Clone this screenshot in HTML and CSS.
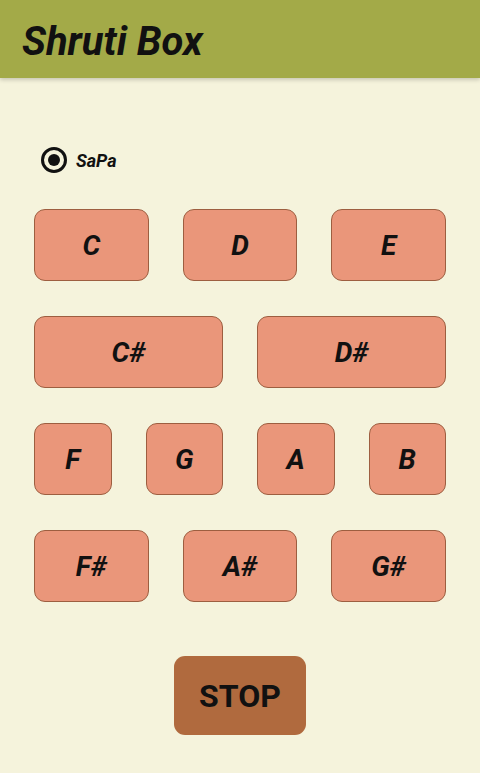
FILE: index.html
```html
<!DOCTYPE html>
<html lang="en">

<head>
  <meta charset="UTF-8">
  <meta name="viewport" content="width=device-width, initial-scale=1.0">
  <title>Shruti Box</title>
  <link rel="stylesheet" href="styles.css">
</head>

<body>
  <div class="bar">
    <h1>Shruti Box</h1>
  </div>

  <div class="main">
    <label class="radio">
      <span class="dot"></span>
      <span class="label">SaPa</span>
    </label>

    <div class="row three">
      <button class="note">C</button>
      <button class="note">D</button>
      <button class="note">E</button>
    </div>
    <div class="row two">
      <button class="note">C#</button>
      <button class="note">D#</button>
    </div>
    <div class="row four">
      <button class="note">F</button>
      <button class="note">G</button>
      <button class="note">A</button>
      <button class="note">B</button>
    </div>
    <div class="row three">
      <button class="note">F#</button>
      <button class="note">A#</button>
      <button class="note">G#</button>
    </div>

    <div class="foot">
      <button class="stop">STOP</button>
    </div>
  </div>
</body>

</html>
```

FILE: styles.css
```css
* {
  margin: 0;
  padding: 0;
  box-sizing: border-box;
}

body {
  width: 480px;
  height: 773px;
  background: #f5f3dc;
  font-family: Roboto, "Liberation Sans", sans-serif;
  overflow: hidden;
}

/* 標題列 */
.bar {
  height: 78px;
  background: #a3aa48;
  padding-left: 22px;
  display: flex;
  align-items: center;
  box-shadow: 0 2px 4px rgba(0, 0, 0, 0.18);
}

.bar h1 {
  font-size: 40px;
  font-weight: bold;
  font-style: italic;
  color: #111;
  margin-top: 4px;
}

.main {
  padding: 70px 34px 0;
}

.radio {
  display: flex;
  align-items: center;
  height: 24px;
  margin-left: 7px;
  margin-bottom: 37px;
}

.dot {
  width: 26px;
  height: 26px;
  border: 3px solid #111;
  border-radius: 50%;
  display: flex;
  align-items: center;
  justify-content: center;
}

.dot::after {
  content: "";
  width: 12px;
  height: 12px;
  border-radius: 50%;
  background: #111;
}

.label {
  margin-left: 9px;
  font-size: 18px;
  font-weight: bold;
  font-style: italic;
  color: #111;
}

.row {
  display: grid;
  gap: 34px;
  margin-bottom: 35px;
}

.three {
  grid-template-columns: repeat(3, 1fr);
}

.two {
  grid-template-columns: repeat(2, 1fr);
}

.four {
  grid-template-columns: repeat(4, 1fr);
}

.note {
  height: 72px;
  background: #ea967a;
  border: 1.5px solid #9d5e40;
  border-radius: 11px;
  font-family: Roboto, "Liberation Sans", sans-serif;
  font-size: 28px;
  font-weight: bold;
  font-style: italic;
  color: #111;
}

.foot {
  display: flex;
  justify-content: center;
  padding-top: 19px;
}

.stop {
  width: 132px;
  height: 79px;
  background: #b06a3e;
  border: none;
  border-radius: 11px;
  font-family: Roboto, "Liberation Sans", sans-serif;
  font-size: 32px;
  font-weight: bold;
  color: #111;
}
```
